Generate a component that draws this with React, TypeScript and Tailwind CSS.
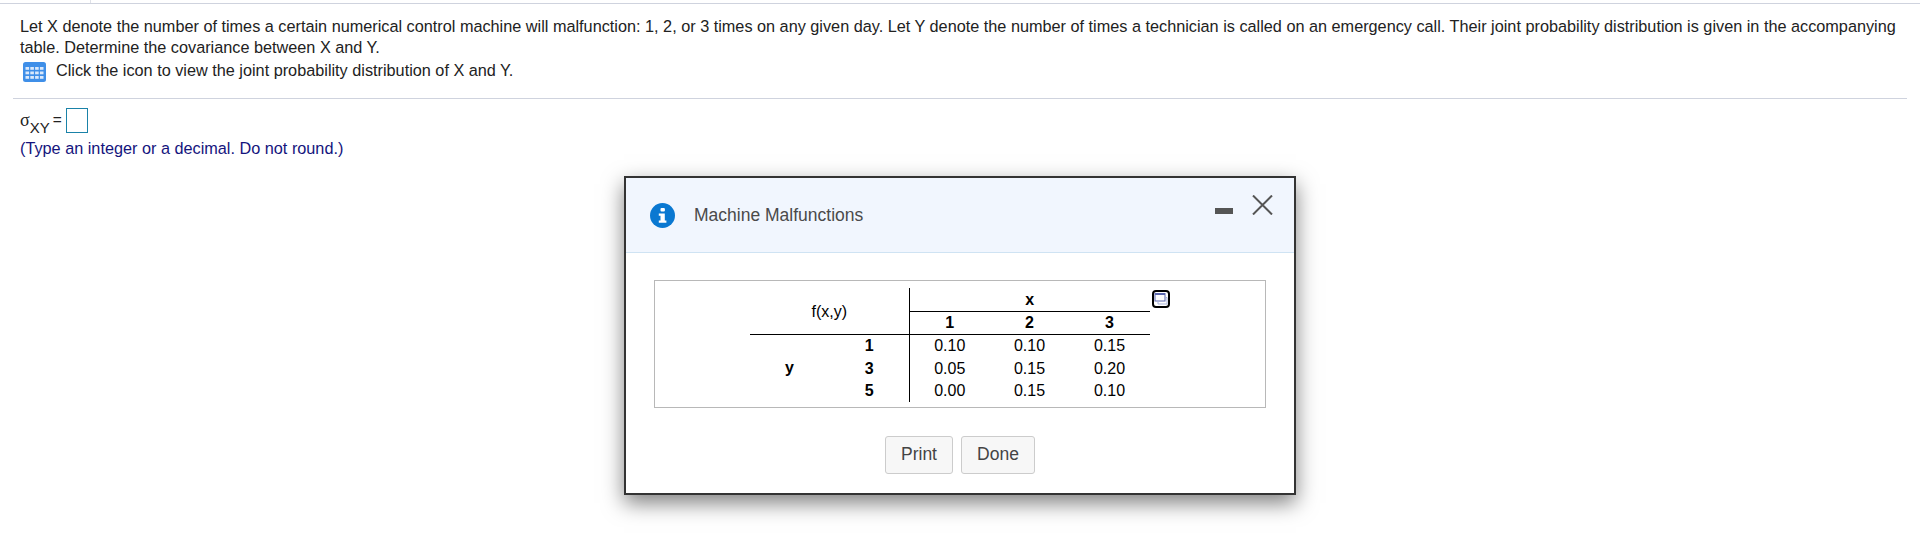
import React from "react";

const ROWS = [
  { label: "1", values: ["0.10", "0.10", "0.15"] },
  { label: "3", values: ["0.05", "0.15", "0.20"] },
  { label: "5", values: ["0.00", "0.15", "0.10"] },
];

function GridIcon() {
  return (
    <svg width="23" height="20" viewBox="0 0 23 20" className="shrink-0">
      <rect width="23" height="20" rx="2.500" fill="#3f8fe8" />
      {[5, 9.500, 14].map((y) =>
        [2.500, 7.300, 12.100, 16.900].map((x) => (
          <rect key={`${x}-${y}`} x={x} y={y} width="3.600" height="2.800" fill="#dbe9fb" />
        ))
      )}
    </svg>
  );
}

function InfoIcon() {
  return (
    <svg width="25" height="25" viewBox="0 0 25 25" className="shrink-0">
      <circle cx="12.5" cy="12.5" r="12.5" fill="#0a78d1" />
      <rect x="10.5" y="5" width="4.4" height="3.6" rx="1" fill="#fff" />
      <path d="M8.8 10.4h6v7h1.6v2.4H8.8v-2.4h1.7v-4.6H8.8z" fill="#fff" />
    </svg>
  );
}

function ExpandIcon() {
  return (
    <svg width="18" height="18" viewBox="0 0 18 18" className="shrink-0">
      <rect x="1" y="1" width="16" height="16" rx="3" fill="#fff" stroke="#000" strokeWidth="2" />
      <rect x="3" y="3.5" width="10" height="7.5" fill="#fff" stroke="#5a66ad" strokeWidth="1" />
      <rect x="3" y="3" width="10" height="2" fill="#5a66ad" />
      <path d="M6 11v3h9V7.500h-2" fill="none" stroke="#a9b3da" strokeWidth="1" />
    </svg>
  );
}

function JointTable() {
  return (
    <table className="w-[400px] table-fixed border-collapse text-[16px] leading-[22px] text-black">
      <tbody>
        <tr>
          <td colSpan={2} rowSpan={2} className="border-b border-r border-black pt-[2px] text-center">
            f(x,y)
          </td>
          <td colSpan={3} className="border-b border-black pt-px text-center font-bold">
            x
          </td>
        </tr>
        <tr>
          {["1", "2", "3"].map((col) => (
            <td key={col} className="border-b border-black text-center font-bold">
              {col}
            </td>
          ))}
        </tr>
        {ROWS.map((row, i) => (
          <tr key={row.label} className={i === 0 ? "h-[23px]" : ""}>
            {i === 0 && (
              <td rowSpan={3} className="text-center font-bold">
                y
              </td>
            )}
            <td className="border-r border-black text-center font-bold">{row.label}</td>
            {row.values.map((v, j) => (
              <td key={j} className="text-center">
                {v}
              </td>
            ))}
          </tr>
        ))}
      </tbody>
    </table>
  );
}

export default function App() {
  return (
    <div className="relative h-[537px] overflow-hidden bg-white font-['Liberation_Sans',Arial,sans-serif] text-[16px] text-[#222]">
      <div className="h-1 border-b border-[#cfd3de]">
        <div className="ml-[90px] h-[3px] w-px bg-[#dfe1e8]" />
      </div>

      <div className="px-[13px]">
        <div className="border-b border-[#cfd3de] pb-[16px]">
          <p className="pl-[7px] pt-[12px] text-[16.25px] leading-[20.5px]">
            Let X denote the number of times a certain numerical control machine will malfunction: 1, 2, or 3 times on
            any given day. Let Y denote the number of times a technician is called on an emergency call. Their joint
            probability distribution is given in the accompanying table. Determine the covariance between X and Y.
          </p>
          <div className="mt-[5px] flex items-center gap-[10px] pl-[10px] text-[16.25px] leading-[20px]">
            <GridIcon />
            <span className="-translate-y-[2px]">Click the icon to view the joint probability distribution of X and Y.</span>
          </div>
        </div>

        <div className="flex items-start pl-[7px] pt-[9px]">
          <span className="font-['Liberation_Serif',serif] text-[18px] leading-[24px]">σ</span>
          <span className="mt-[12px] text-[15px] leading-[16px]">XY</span>
          <span className="ml-[3px] mr-[4px] mt-[4px] text-[15.5px] leading-[16px]">=</span>
          <span className="h-[25px] w-[22px] border border-[#1a82a8]" />
        </div>
        <p className="pl-[7px] pt-[2px] text-[16.25px] leading-[20px] text-[#14147d]">
          (Type an integer or a decimal. Do not round.)
        </p>
      </div>

      {/* Dialog */}
      <div className="absolute left-[624px] top-[176px] h-[319px] w-[672px] border-2 border-[#333] bg-white shadow-[0_8px_20px_rgba(0,0,0,0.5)]">
        <div className="flex h-[75px] items-center border-b border-[#cfe3f3] bg-[#f1f6fe] pl-[24px]">
          <InfoIcon />
          <span className="ml-[19px] text-[17.5px] text-[#4a4a4a]">Machine Malfunctions</span>
          <div className="ml-auto flex items-center">
            <span className="-mt-[8px] h-[6px] w-[18px] bg-[#555]" />
            <svg width="21" height="20" viewBox="0 0 21 20" className="ml-[19px] mr-[21px] -mt-[20px]">
              <path d="M1 0.500 20 19.500M20 0.500 1 19.500" stroke="#555" strokeWidth="2" fill="none" />
            </svg>
          </div>
        </div>

        <div className="mx-[28px] mt-[27px] flex h-[128px] items-start justify-center gap-[2px] border border-[#b8b8b8] pr-[1px] pt-[7px]">
          <JointTable />
          <div className="pt-[2px]">
            <ExpandIcon />
          </div>
        </div>

        <div className="mt-[28px] flex justify-center gap-[8px]">
          <button className="h-[38px] w-[68px] rounded-[3px] border border-[#ccc] bg-[#f7f7f7] pb-[2px] text-[17.5px] text-[#444]">
            Print
          </button>
          <button className="h-[38px] w-[74px] rounded-[3px] border border-[#ccc] bg-[#f7f7f7] pb-[2px] text-[17.5px] text-[#444]">
            Done
          </button>
        </div>
      </div>
    </div>
  );
}
